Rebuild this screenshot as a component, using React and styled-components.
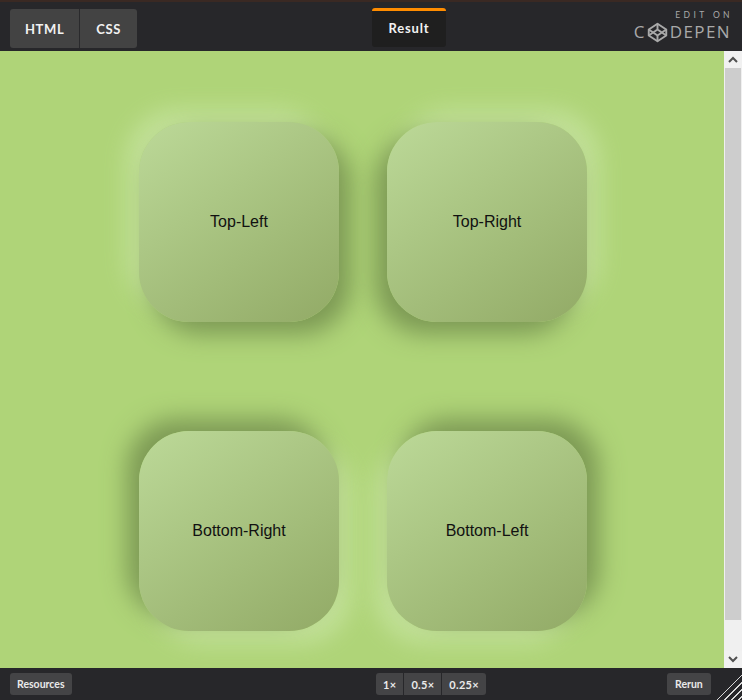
import React from "react";
import styled, { createGlobalStyle } from "styled-components";

const Global = createGlobalStyle`
  html, body {
    margin: 0;
    padding: 0;
    background: #1f1f21;
  }
  * { box-sizing: border-box; }
`;

const Frame = styled.div`
  width: 742px;
  height: 700px;
  display: flex;
  flex-direction: column;
  background: #2a2a2c;
  font-family: "Lato", "Open Sans", sans-serif;
  position: relative;
  overflow: hidden;
`;

const TopBar = styled.div`
  height: 51px;
  border-top: 2px solid #3a2923;
  background: #27272a;
  display: flex;
  align-items: flex-end;
  padding: 0 10px 3px 10px;
  position: relative;
`;

const TabGroup = styled.div`
  display: flex;
  gap: 1px;
  height: 39px;
  background: #2a2a2c;
  border-radius: 3px;
  overflow: hidden;
`;

const Tab = styled.div`
  height: 100%;
  padding: 0 ${p => p.$pad}px;
  display: flex;
  align-items: center;
  background: #434343;
  color: #f2f2f2;
  font-size: 13px;
  font-weight: 700;
  letter-spacing: 0.6px;
`;

const ResultTab = styled.div`
  position: absolute;
  left: 372px;
  top: 6px;
  width: 74px;
  height: 39px;
  border-top: 3px solid #ff8c00;
  border-radius: 3px;
  background: #1f1f1f;
  color: #f2f2f2;
  font-size: 13px;
  font-weight: 700;
  letter-spacing: 0.8px;
  display: flex;
  align-items: center;
  justify-content: center;
  padding-bottom: 3px;
`;

const Brand = styled.div`
  position: absolute;
  right: 12px;
  top: 7px;
  display: flex;
  flex-direction: column;
  align-items: flex-end;
  color: #a9a9a9;
`;

const EditOn = styled.div`
  font-size: 8.5px;
  letter-spacing: 3.4px;
  margin-right: -3px;
  line-height: 12px;
`;

const PenWord = styled.div`
  display: flex;
  align-items: center;
  font-size: 17px;
  letter-spacing: 1.4px;
  line-height: 22px;
  font-family: "Open Sans", "Lato", sans-serif;
  margin-right: -1px;
`;

const Body = styled.div`
  flex: 1;
  display: flex;
  min-height: 0;
`;

const Stage = styled.div`
  flex: 1;
  background: #afd478;
  font-family: "Liberation Sans", Arial, sans-serif;
  display: flex;
  justify-content: center;
  align-items: flex-start;
  padding: 71px 0 0 2px;
`;

const Grid = styled.div`
  display: grid;
  grid-template-columns: 200px 200px;
  column-gap: 48px;
  row-gap: 109px;
`;

const shadows = {
  tl: "12px 12px 24px #7c9954, -12px -12px 24px #c4e29b",
  tr: "-12px 12px 24px #7c9954, 12px -12px 24px #c4e29b",
  br: "-12px -12px 24px #7c9954, 12px 12px 24px #c4e29b",
  bl: "12px -12px 24px #7c9954, -12px 12px 24px #c4e29b",
};

const Card = styled.div`
  width: 200px;
  height: 200px;
  border-radius: 50px;
  background: linear-gradient(145deg, #bcd998, #92aa66);
  box-shadow: ${p => shadows[p.$dir]};
  display: flex;
  align-items: center;
  justify-content: center;
  font-size: 16px;
  color: #111;
`;

const Scroll = styled.div`
  width: 18px;
  display: flex;
  flex-direction: column;
  background: #f0f0f0;
`;

const Arrow = styled.div`
  height: 17px;
  display: flex;
  align-items: center;
  justify-content: center;
  background: #f1f1f1;
`;

const Thumb = styled.div`
  height: 552px;
  margin: 0 1px;
  background: #cdcdcd;
`;

const Track = styled.div`
  flex: 1;
`;

const BottomBar = styled.div`
  height: 32px;
  background: #27272a;
  display: flex;
  align-items: center;
  padding: 0 10px;
  position: relative;
`;

const SmallButton = styled.div`
  height: 22px;
  padding: 0 ${p => p.$pad || 7}px;
  background: #444446;
  border-radius: 3px;
  color: #eaeaea;
  font-size: 10.5px;
  font-weight: 700;
  display: flex;
  align-items: center;
`;

const ZoomGroup = styled.div`
  position: absolute;
  left: 376px;
  top: 5px;
  display: flex;
  gap: 1px;
  border-radius: 3px;
  overflow: hidden;
`;

const ZoomButton = styled(SmallButton)`
  border-radius: 0;
  letter-spacing: 0.3px;
  font-size: 11px;
`;

const RerunButton = styled(SmallButton)`
  position: absolute;
  left: 667px;
  top: 5px;
`;

const Grip = styled.div`
  position: absolute;
  right: 0;
  bottom: 0;
  width: 28px;
  height: 28px;
  background: repeating-linear-gradient(
    -45deg,
    transparent 0 2px,
    #d8d8d8 2px 3px,
    transparent 3px 5px
  );
  clip-path: polygon(100% 0, 100% 100%, 0 100%);
`;

const Chevron = ({ up }) => (
  <svg width="10" height="7" viewBox="0 0 10 7">
    <path
      d={up ? "M1 6 L5 2 L9 6" : "M1 1 L5 5 L9 1"}
      fill="none"
      stroke="#505050"
      strokeWidth="2"
    />
  </svg>
);

const PenLogo = () => (
  <svg width="21" height="21" viewBox="0 0 24 24" style={{ margin: "0 2px 0 1px" }}>
    <g fill="none" stroke="#a9a9a9" strokeWidth="2.2" strokeLinejoin="round">
      <path d="M12 2 L22 8.5 V15.5 L12 22 L2 15.5 V8.5 Z" />
      <path d="M12 22 V15.5 M22 8.5 L12 15.5 L2 8.5 M2 15.5 L12 8.5 L22 15.5 M12 2 V8.5" />
    </g>
  </svg>
);

const cards = [
  { dir: "tl", label: "Top-Left" },
  { dir: "tr", label: "Top-Right" },
  { dir: "br", label: "Bottom-Right" },
  { dir: "bl", label: "Bottom-Left" },
];

const App = () => (
  <>
    <Global />
    <Frame>
      <TopBar>
        <TabGroup>
          <Tab $pad={15}>HTML</Tab>
          <Tab $pad={16}>CSS</Tab>
        </TabGroup>
        <ResultTab>Result</ResultTab>
        <Brand>
          <EditOn>EDIT ON</EditOn>
          <PenWord>
            C<PenLogo />DEPEN
          </PenWord>
        </Brand>
      </TopBar>
      <Body>
        <Stage>
          <Grid>
            {cards.map(c => (
              <Card key={c.dir} $dir={c.dir}>
                {c.label}
              </Card>
            ))}
          </Grid>
        </Stage>
        <Scroll>
          <Arrow>
            <Chevron up />
          </Arrow>
          <Thumb />
          <Track />
          <Arrow>
            <Chevron />
          </Arrow>
        </Scroll>
      </Body>
      <BottomBar>
        <SmallButton>Resources</SmallButton>
        <ZoomGroup>
          <ZoomButton $pad={7}>1×</ZoomButton>
          <ZoomButton $pad={7}>0.5×</ZoomButton>
          <ZoomButton $pad={7}>0.25×</ZoomButton>
        </ZoomGroup>
        <RerunButton $pad={8}>Rerun</RerunButton>
        <Grip />
      </BottomBar>
    </Frame>
  </>
);

export default App;
